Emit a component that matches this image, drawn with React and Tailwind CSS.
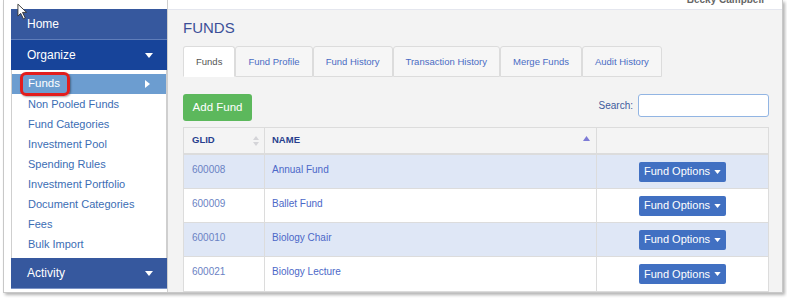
import React from 'react'

const LINKS = ['Non Pooled Funds', 'Fund Categories', 'Investment Pool', 'Spending Rules', 'Investment Portfolio', 'Document Categories', 'Fees', 'Bulk Import']
const TABS = ['Funds', 'Fund Profile', 'Fund History', 'Transaction History', 'Merge Funds', 'Audit History']
const ROWS = [
  { id: '600008', name: 'Annual Fund' },
  { id: '600009', name: 'Ballet Fund' },
  { id: '600010', name: 'Biology Chair' },
  { id: '600021', name: 'Biology Lecture' },
]

function Caret({ className }) {
  return (
    <svg viewBox="0 0 8 5" className={className}>
      <path d="M0 0h8L4 5z" fill="currentColor" />
    </svg>
  )
}

function Sidebar() {
  return (
    <div className="w-[156px] shrink-0 pt-[9px] bg-white">
      <div className="h-[31px] bg-[#36589e] flex items-center px-[16px] text-white text-[12px] border-b border-[#5f7dba]">Home</div>
      <div className="h-[30px] bg-[#17449a] flex items-center justify-between px-[16px] text-white text-[12px]">
        <span>Organize</span>
        <Caret className="w-[8px] h-[5px] mr-[-2px]" />
      </div>
      <div className="border-x border-[#cfcfcf] pt-[4px] pb-[4px]">
        <div className="relative h-[20px] bg-[#6c9dd0] flex items-center justify-between pl-[16px] pr-[16px] text-white text-[11.5px]">
          <span>Funds</span>
          <svg viewBox="0 0 5 8" className="w-[5px] h-[8px]"><path d="M0 0v8l5-4z" fill="white" /></svg>
          <div className="absolute left-[8px] top-[-2px] w-[50px] h-[24px] border-[3px] border-[#e21d1d] rounded-[6px] shadow-[1px_1px_2px_rgba(0,0,0,0.35)]" />
        </div>
        {LINKS.map(l => (
          <div key={l} className="h-[20px] flex items-center pl-[16px] text-[11px] text-[#3b6db4]">{l}</div>
        ))}
      </div>
      <div className="h-[31px] bg-[#36589e] flex items-center justify-between px-[16px] text-white text-[12px] border-b border-[#7b93c6]">
        <span>Activity</span>
        <Caret className="w-[8px] h-[5px] mr-[-2px]" />
      </div>
    </div>
  )
}

function Main() {
  return (
    <div className="flex-1 bg-[#f3f3f3] border-l border-[#cfcfcf] relative">
      <div className="h-[10px] bg-white border-b border-[#e4e6ee] relative overflow-hidden">
        <span className="absolute right-[18px] top-[-6px] text-[10px] font-bold text-[#666] leading-[12px]">Becky Campbell</span>
      </div>
      <div className="pl-[15px] pr-[13px]">
        <h1 className="text-[15px] text-[#3b4f98] mt-[9px] leading-[18px]">FUNDS</h1>
        <div className="flex mt-[9px]">
          {TABS.map((t, i) => (
            <div key={t} className={`h-[31px] px-[12px] pt-[1px] flex items-center text-[9.5px] rounded-t-[3px] border border-[#dcdcdc] ${i === 0 ? 'bg-white text-[#555] border-b-white' : 'bg-[#f6f6f6] text-[#4a6cc4]'}`}>
              {t}
            </div>
          ))}
        </div>
        <div className="flex items-center justify-between mt-[17px]">
          <div className="h-[27px] w-[69px] bg-[#5cb85c] rounded-[3px] text-white text-[11.5px] flex items-center justify-center">Add Fund</div>
          <div className="flex items-center gap-[5px] mb-[4px]">
            <span className="text-[10px] text-[#3e5a9c]">Search:</span>
            <div className="w-[131px] h-[23px] bg-white border border-[#92b5e3] rounded-[3px]" />
          </div>
        </div>
        <div className="mt-[6px] border border-[#dcdcdc] bg-white">
          <div className="flex h-[27px] bg-[#f4f4f4] border-b-2 border-[#dcdcdc] text-[9.5px] font-bold text-[#283f8e]">
            <div className="w-[81px] border-r border-[#dcdcdc] flex items-center justify-between pl-[8px] pr-[5px]">
              <span>GLID</span>
              <svg viewBox="0 0 6 12" className="w-[6px] h-[12px]"><path d="M0 5L3 1L6 5z M0 7L3 11L6 7z" fill="#d4d4d8" /></svg>
            </div>
            <div className="w-[332px] border-r border-[#dcdcdc] flex items-center justify-between pl-[7px] pr-[6px]">
              <span>NAME</span>
              <svg viewBox="0 0 7 5" className="w-[7px] h-[5px] mb-[5px]"><path d="M0 5L3.5 0L7 5z" fill="#7d7bd6" /></svg>
            </div>
            <div className="flex-1" />
          </div>
          {ROWS.map((r, i) => (
            <div key={r.id} className={`flex h-[34px] text-[10px] ${i % 2 === 0 ? 'bg-[#dfe7f6]' : 'bg-white'} ${i < ROWS.length - 1 ? 'border-b border-[#dcdcdc]' : ''}`}>
              <div className="w-[81px] border-r border-[#dcdcdc] pl-[8px] pt-[7px] text-[#6a82c4]">{r.id}</div>
              <div className="w-[332px] border-r border-[#dcdcdc] pl-[7px] pt-[7px] text-[#4c68c8]">{r.name}</div>
              <div className="flex-1 flex items-center justify-center">
                <div className="h-[20px] w-[87px] bg-[#4170c2] rounded-[2px] text-white text-[11px] flex items-center justify-center gap-[4px]">
                  <span>Fund Options</span>
                  <Caret className="w-[7px] h-[4px]" />
                </div>
              </div>
            </div>
          ))}
        </div>
      </div>
    </div>
  )
}

export default function App() {
  return (
    <div className="w-[787px] h-[300px] bg-white relative overflow-hidden font-['Liberation_Sans',Arial,sans-serif]">
      <div className="ml-[3px] w-[780px] h-[293px] border-l border-r border-b border-[#c8c8c8] shadow-[2px_2px_3px_rgba(0,0,0,0.3)] flex overflow-hidden bg-white pl-[7px]">
        <Sidebar />
        <Main />
      </div>
      <svg viewBox="0 0 12 18" className="absolute left-[17px] top-[3px] w-[11px] h-[17px]">
        <path d="M1 1L1 14L4 11L7 17L9 16L6 10L10.5 10Z" fill="white" stroke="#333" strokeWidth="1" strokeLinejoin="round" />
      </svg>
    </div>
  )
}
